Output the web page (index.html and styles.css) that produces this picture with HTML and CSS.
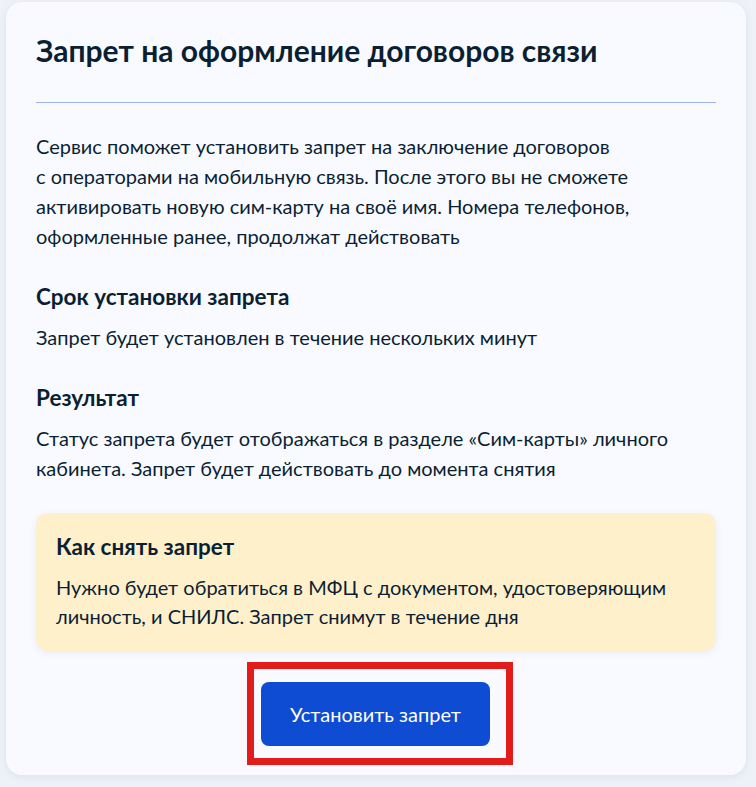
FILE: index.html
```html
<!DOCTYPE html>
<html lang="ru">
<head>
    <meta charset="UTF-8">
    <meta name="viewport" content="width=device-width, initial-scale=1.0">
    <title>Запрет на оформление договоров связи</title>
    <link rel="stylesheet" href="styles.css">
</head>
<body>
    <div class="card">
        <h1 class="title">Запрет на оформление договоров связи</h1>
        <hr class="divider">
        <p class="text">Сервис поможет установить запрет на заключение договоров<br>
            с операторами на мобильную связь. После этого вы не сможете
            активировать новую сим-карту на своё имя. Номера телефонов,
            оформленные ранее, продолжат действовать</p>

        <h2 class="subtitle">Срок установки запрета</h2>
        <p class="text">Запрет будет установлен в течение нескольких минут</p>

        <h2 class="subtitle">Результат</h2>
        <p class="text">Статус запрета будет отображаться в разделе «Сим-карты» личного
            кабинета. Запрет будет действовать до момента снятия</p>

        <div class="notice">
            <h3 class="notice-title">Как снять запрет</h3>
            <p class="text">Нужно будет обратиться в МФЦ с документом, удостоверяющим
                личность, и СНИЛС. Запрет снимут в течение дня</p>
        </div>

        <div class="actions">
            <div class="highlight">
                <button class="btn-primary" type="button">Установить запрет</button>
            </div>
        </div>
    </div>
</body>
</html>
```

FILE: styles.css
```css
body {
    margin: 0;
    background-color: #eef2f8;
    font-family: "Lato", "Noto Sans", sans-serif;
    color: #0b1f33;
}
.card {
    width: 680px;
    margin: 2px 10px 10px 6px;
    padding: 30px 30px 10px 30px;
    background: #f8faff;
    border-radius: 16px;
    box-shadow: 0 2px 8px rgba(100, 120, 160, 0.12);
}
.title {
    margin: 0;
    font-size: 30px;
    line-height: 36px;
    font-weight: 700;
}
.divider {
    margin: 34px 0 28px 0;
    border: none;
    border-top: 1px solid #9eb6ec;
}
.text {
    margin: 0;
    font-size: 20px;
    line-height: 30px;
}
.subtitle {
    margin: 31px 0 10px 0;
    font-size: 22.5px;
    line-height: 30px;
    font-weight: 700;
}
.notice {
    margin-top: 30px;
    padding: 19px 20px 20px 20px;
    background: #fff0cc;
    border-radius: 12px;
    box-shadow: 0 2px 6px rgba(100, 120, 160, 0.1);
}
.notice .text {
    line-height: 29px;
}
.notice-title {
    margin: 0 0 11px 0;
    font-size: 22.5px;
    line-height: 30px;
    font-weight: 700;
}
.actions {
    display: flex;
    justify-content: center;
    margin-top: 11px;
}
.highlight {
    margin-left: 8px;
    border: 7px solid #e21b1b;
    padding: 13px 16px 12px 7px;
}
.btn-primary {
    display: block;
    width: 229px;
    height: 64px;
    border: none;
    border-radius: 8px;
    background-color: #0d4cd3;
    color: #fff;
    font-family: "Lato", "Noto Sans", sans-serif;
    font-size: 20px;
    cursor: pointer;
}
```
